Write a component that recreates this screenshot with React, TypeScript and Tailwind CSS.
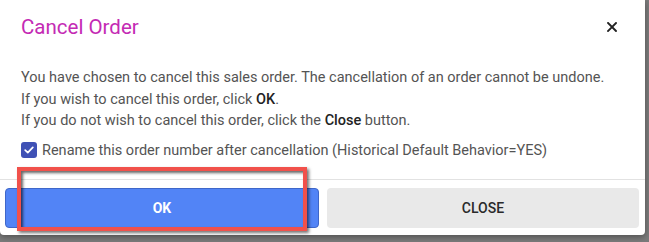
import { useState } from 'react';

export default function App() {
  const [rename, setRename] = useState(true);

  return (
    <div className="relative w-[649px] h-[242px] overflow-hidden bg-[#7b7b7b] font-['Roboto',sans-serif]">
      <div className="flex w-[645px] h-[235px] flex-col rounded-b-[4px] bg-white shadow-[0_2px_6px_rgba(0,0,0,0.35)]">
        {/* header */}
        <div className="flex items-center justify-between pl-[21px] pr-[26px] pt-[14px]">
          <h2 className="text-[20.5px] leading-[26px] font-normal text-[#c42ab4]">Cancel Order</h2>
          <button type="button" className="flex h-[14px] w-[14px] items-center justify-center text-[#222]">
            <svg width="10" height="10" viewBox="0 0 10 10" fill="none" stroke="currentColor" strokeWidth="1.9" strokeLinecap="square">
              <path d="M1 1L9 9M9 1L1 9" />
            </svg>
          </button>
        </div>

        {/* body */}
        <div className="px-[21px] pt-[27px] text-[14.5px] leading-[21.5px] text-[#545454]">
          <p>You have chosen to cancel this sales order. The cancellation of an order cannot be undone.</p>
          <p>
            If you wish to cancel this order, click <span className="font-medium text-[#222]">OK</span>.
          </p>
          <p>
            If you do not wish to cancel this order, click the <span className="font-medium text-[#222]">Close</span> button.
          </p>
          <label className="mt-[8px] flex items-center gap-[5px] cursor-pointer">
            <button
              type="button"
              onClick={() => setRename(v => !v)}
              className="flex h-[16px] w-[16px] items-center justify-center rounded-[3px] bg-[#3f51b5]"
            >
              {rename && (
                <svg width="10" height="8" viewBox="0 0 10 8" fill="none" stroke="white" strokeWidth="1.7" strokeLinecap="round" strokeLinejoin="round">
                  <path d="M1.2 4.2L3.8 6.6L8.8 1.4" />
                </svg>
              )}
            </button>
            <span>Rename this order number after cancellation (Historical Default Behavior=YES)</span>
          </label>
        </div>

        {/* footer */}
        <div className="mt-auto border-t border-[#e2e2e2] pl-[5px] pr-[6px] pt-[8px] pb-[7px] flex gap-[8px]">
          <button
            type="button"
            className="h-[40px] flex-1 rounded-[4px] border border-[#3f67c9] bg-[#5284f6] text-[14px] font-bold text-white"
          >
            OK
          </button>
          <button
            type="button"
            className="h-[40px] flex-1 rounded-[4px] bg-[#e9e9e9] text-[14px] font-medium text-[#2a2a2a]"
          >
            CLOSE
          </button>
        </div>
      </div>

      {/* annotation highlight */}
      <div className="pointer-events-none absolute left-[17px] top-[167px] h-[64px] w-[290px] border-[4px] border-[#f1514b] shadow-[2px_2px_3px_rgba(0,0,0,0.55),inset_2px_2px_3px_rgba(0,0,0,0.6)]" />
    </div>
  );
}
